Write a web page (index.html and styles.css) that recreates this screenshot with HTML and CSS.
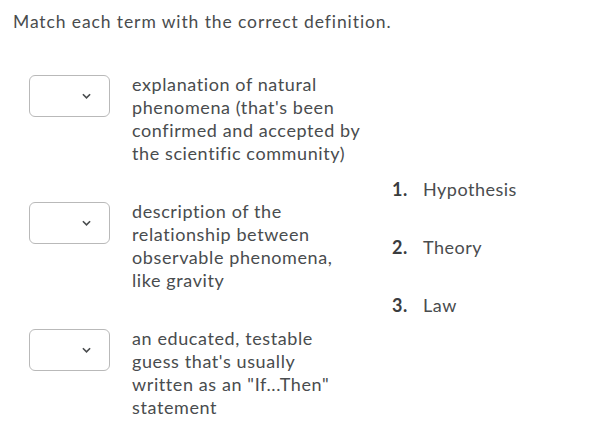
FILE: index.html
```html
<!DOCTYPE html>
<html lang="en">
<head>
  <meta charset="UTF-8">
  <title>Matching Question</title>
  <link rel="stylesheet" href="styles.css">
</head>
<body>

<div class="question">
  <p class="prompt">Match each term with the correct definition.</p>

  <div class="match">
    <div class="defs">
      <div class="row">
        <div class="select">
          <svg viewBox="0 0 10 6"><path d="M1 1l4 4 4-4"/></svg>
        </div>
        <div class="def">explanation of natural phenomena (that's been confirmed and accepted by the scientific community)</div>
      </div>
      <div class="row">
        <div class="select">
          <svg viewBox="0 0 10 6"><path d="M1 1l4 4 4-4"/></svg>
        </div>
        <div class="def">description of the relationship between observable phenomena, like gravity</div>
      </div>
      <div class="row">
        <div class="select">
          <svg viewBox="0 0 10 6"><path d="M1 1l4 4 4-4"/></svg>
        </div>
        <div class="def">an educated, testable guess that's usually written as an "If...Then" statement</div>
      </div>
    </div>

    <ol class="terms">
      <li><span class="num">1.</span>Hypothesis</li>
      <li><span class="num">2.</span>Theory</li>
      <li><span class="num">3.</span>Law</li>
    </ol>
  </div>
</div>

</body>
</html>
```

FILE: styles.css
```css
body {
  margin: 0;
  background: #ffffff;
  font-family: Lato, "Liberation Sans", sans-serif;
  color: #494c4e;
  font-variant-ligatures: none;
}

.prompt {
  margin: 0;
  padding: 12px 13px 0;
  font-size: 17.5px;
  line-height: 20px;
  letter-spacing: 0.9px;
}

.match {
  display: flex;
  margin-top: 43px;
}

.defs {
  display: flex;
  flex-direction: column;
  gap: 37px;
  padding-left: 29px;
}

.row {
  display: flex;
  align-items: flex-start;
  gap: 22px;
}

.select {
  width: 81px;
  height: 42px;
  box-sizing: border-box;
  border: 1px solid #b9b9b9;
  border-radius: 6px;
  display: flex;
  align-items: center;
  justify-content: flex-end;
  padding-right: 18px;
}

.select svg {
  width: 9px;
  height: 6px;
  fill: none;
  stroke: #494c4e;
  stroke-width: 1.8;
}

.def {
  width: 229px;
  margin-top: -2px;
  font-size: 18px;
  line-height: 23px;
  letter-spacing: 0.6px;
}

.terms {
  list-style: none;
  margin: 0 0 0 31px;
  padding: 0;
  align-self: center;
  display: flex;
  flex-direction: column;
  gap: 35px;
}

.terms li {
  display: flex;
  font-size: 18px;
  line-height: 23px;
  letter-spacing: 0.5px;
}

.num {
  width: 31px;
  font-weight: bold;
  color: #3a3c3e;
}
```
